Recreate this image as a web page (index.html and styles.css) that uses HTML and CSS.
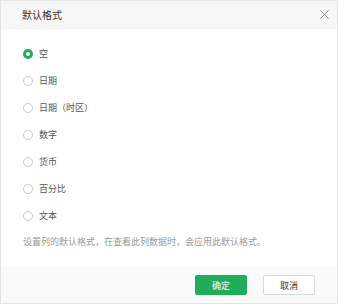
FILE: index.html
```html
<!DOCTYPE html>
<html lang="zh-CN">
<head>
  <meta charset="UTF-8" />
  <title>默认格式</title>
  <link rel="stylesheet" href="styles.css">
</head>
<body>
  <div class="dialog">
    <div class="dialog-header">
      <span class="dialog-title">默认格式</span>
      <span class="dialog-close">
        <svg width="9" height="9" viewBox="0 0 9 9"><path d="M0.5 0.5L8.5 8.5M8.5 0.5L0.5 8.5" stroke="#8c8c8c" stroke-width="1" fill="none"/></svg>
      </span>
    </div>

    <div class="dialog-body">
      <ul class="radio-list">
        <li class="radio-item checked"><span class="radio"></span><span class="radio-label">空</span></li>
        <li class="radio-item"><span class="radio"></span><span class="radio-label">日期</span></li>
        <li class="radio-item"><span class="radio"></span><span class="radio-label">日期（时区）</span></li>
        <li class="radio-item"><span class="radio"></span><span class="radio-label">数字</span></li>
        <li class="radio-item"><span class="radio"></span><span class="radio-label">货币</span></li>
        <li class="radio-item"><span class="radio"></span><span class="radio-label">百分比</span></li>
        <li class="radio-item"><span class="radio"></span><span class="radio-label">文本</span></li>
      </ul>
      <p class="hint">设置列的默认格式，在查看此列数据时，会应用此默认格式。</p>
    </div>

    <div class="dialog-footer">
      <button class="btn btn-primary">确定</button>
      <button class="btn">取消</button>
    </div>
  </div>
</body>
</html>
```

FILE: styles.css
```css
html, body {
  margin: 0;
  padding: 0;
  background-color: #fff;
}

body {
  font-family: "Noto Sans CJK SC", "Noto Sans", sans-serif;
  color: #333;
}

.dialog {
  width: 338px;
  height: 304px;
  box-sizing: border-box;
  border: 1px solid #e4e4e4;
  display: flex;
  flex-direction: column;
}

.dialog-header {
  height: 27px;
  background-color: #f7f7f7;
  border-bottom: 1px solid #ececec;
  display: flex;
  align-items: center;
  justify-content: space-between;
  padding: 0 8px 0 21px;
}

.dialog-title {
  font-size: 10px;
  color: #333;
}

.dialog-close {
  display: flex;
  width: 9px;
  height: 9px;
}

.dialog-body {
  flex: 1;
  padding: 11px 22px 0 22px;
}

.radio-list {
  list-style: none;
  margin: 0;
  padding: 0;
}

.radio-item {
  height: 27px;
  display: flex;
  align-items: center;
}

.radio {
  width: 10px;
  height: 10px;
  box-sizing: border-box;
  border: 1px solid #c9c9c9;
  border-radius: 50%;
  background-color: #fff;
  margin-right: 6px;
}

.radio-item.checked .radio {
  border: 3px solid #1fad5b;
}

.radio-label {
  font-size: 9px;
  color: #555;
}

.hint {
  margin: 6px 0 0 0;
  font-size: 9px;
  line-height: 14px;
  color: #999;
}

.dialog-footer {
  height: 37px;
  background-color: #fafafa;
  display: flex;
  justify-content: flex-end;
  align-items: flex-start;
  padding: 9px 22px 0 0;
  box-sizing: border-box;
  gap: 16px;
}

.btn {
  width: 52px;
  height: 20px;
  font-family: inherit;
  font-size: 9px;
  color: #333;
  background-color: #fff;
  border: 1px solid #d9d9d9;
  border-radius: 2px;
  padding: 0;
  cursor: pointer;
}

.btn-primary {
  background-color: #1fad5b;
  border-color: #1fad5b;
  color: #fff;
}
```
